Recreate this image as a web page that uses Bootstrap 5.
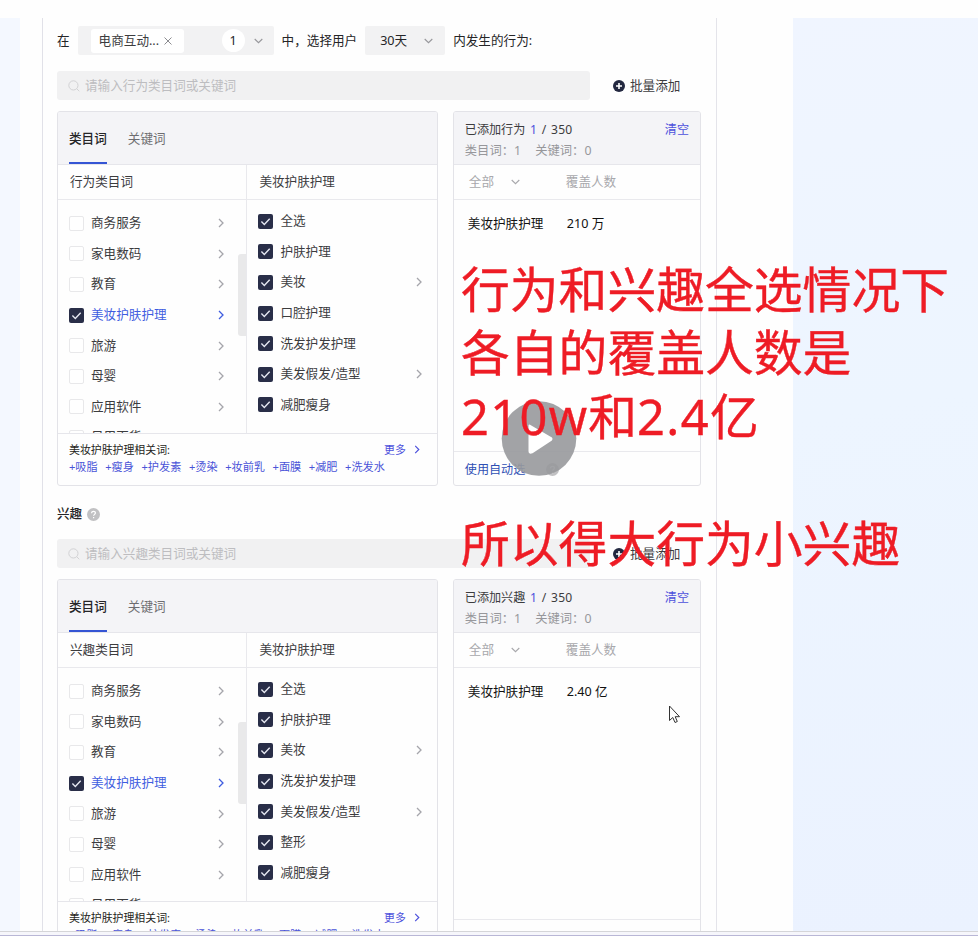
<!DOCTYPE html>
<html lang="zh-CN">
<head>
<meta charset="utf-8">
<meta name="viewport" content="width=device-width, initial-scale=1">
<title>行为兴趣定向</title>
<link href="https://cdn.jsdelivr.net/npm/bootstrap@5.3.0/dist/css/bootstrap.min.css" rel="stylesheet">
<style>
  body{font-family:"Noto Sans","Noto Sans CJK SC",sans-serif;font-size:12.6px;line-height:18px;color:#3c3c3e;height:936px;overflow:hidden;background:#fff}
  .topbar{height:18px;background:#fefefe}
  .stage{height:913px;background:linear-gradient(90deg,#f4f8ff 0,#f4f8ff 20px,transparent 20px),linear-gradient(170deg,#f1f5ff,#edf5ff 50%,#ebf2ff)}
  .sheet{width:773px;margin-left:20px;padding:0 76px 0 22px;background:#fefefe}
  .inner{border-left:1px solid #e1e1e8;border-right:1px solid #e4e4ea;height:913px;padding:8px 15px 0 14px}
  .botbar{height:5px;background:#f6f6fb;border-top:1px solid #d5d5d8;border-bottom:1px solid #b9b7d6}
  .sel{background:#f2f2f3;height:29px;border-radius:2px}
  .cond{height:29px;color:#252527}
  .chip{background:#fff;height:24px;width:93px;border-radius:3px;margin-left:13px;padding-left:8px;color:#3c3c3e}
  .cnt{width:23px;height:23px;border-radius:50%;background:#fff;margin-left:38px}
  .find{width:533px;height:29px;background:#f1f1f2;border-radius:3px;color:#bdbdc0;padding-left:11px;gap:5px}
  .find svg{color:#d2d2d4}
  .addb{margin-left:23px;gap:5px}
  .findrow{height:29px}
  .panels{margin-top:11px;gap:15px;height:375px}
  .box{border:1px solid #e3e3e8;border-radius:3px;background:#fefefe;overflow:hidden}
  .b-left{width:382px}
  .b-right{width:249px}
  .hd{height:53px;background:#f4f4f7;border-bottom:1px solid #e6e6eb;flex:none}
  .b-left .hd{padding:0 11px;gap:21px;color:#6d6d70}
  .tab{border-bottom:2px solid transparent;padding-top:3px}
  .tab.on{color:#252527;font-weight:500;border-color:#3555d4}
  .colwrap{height:268px;flex:none}
  .c1{width:190px;border-right:1px solid #e9e9ed;position:relative}
  .c2{width:190px}
  .sub{height:35px;border-bottom:1px solid #e9e9ed;flex:none}
  .c1 .sub{padding-left:12px}
  .c2 .sub{padding-left:12px}
  .lst{overflow:hidden;height:233px}
  .c1 .lst{padding:8px 22px 0 11px}
  .c2 .lst{padding:6px 15px 0 11px}
  .it{height:30.6px;gap:7px}
  .bx{width:15px;height:15px;border:1px solid #e8e8ea;border-radius:2px;flex:none;background:#fff}
  .bx.ck{border:0;background:#292e48}
  .bx svg{display:block}
  .arr{color:#a5a5ab;margin-left:auto;flex:none}
  .blue{color:#3f5de0}
  .it.blue .arr{color:#3f5de0}
  .thumb{position:absolute;right:0;top:89px;width:8px;height:82px;background:#e9e9ea;border-radius:3px 0 0 3px}
  .rel{border-top:1px solid #e6e6eb;padding:7px 17px 0 11px;font-size:10.9px;line-height:17px;color:#1f1f21;flex:1}
  .rel .tags{gap:7.6px;color:#4a53d8;white-space:nowrap;font-size:11.15px}
  .b-right .hd{padding:8px 11px 0;font-size:12.1px;line-height:20.5px}
  .num{word-spacing:1.2px;letter-spacing:.25px}
  .mut{color:#97979b}
  .hd .mut{font-size:12.3px}
  .vio{color:#4d51dc}
  .flt{height:35px;border-bottom:1px solid #e9e9ed;color:#a8a8ac;font-size:12.6px;padding-left:15px;flex:none}
  .w1{width:97px;flex:none}
  .res{height:47px;color:#111;padding-left:14px}
  .auto{height:34px;border-top:1px solid #e9e9ed;padding:2px 0 0 11px;color:#2f4fb4;font-size:12.1px}
  .ttl{height:18px;margin-top:19px;color:#252527;font-weight:500;gap:5px}
  .play{position:absolute;left:501px;top:400px}
  .note{position:absolute;left:461px;top:258px;font-size:48.8px;line-height:63.4px;color:#ee1c25;white-space:pre;-webkit-text-stroke:.4px #ee1c25}
  .note span{letter-spacing:1.3px}
  .cur{position:absolute;left:668px;top:705px}
</style>
</head>
<body class="position-relative">
<svg width="0" height="0" class="position-absolute">
  <symbol id="ck" viewBox="0 0 15 15"><path d="M3.4 7.600l2.900 2.800 5.400-5.600" fill="none" stroke="#e6e8f2" stroke-width="1.4"/></symbol>
  <symbol id="ar" viewBox="0 0 6 10"><path d="M1 1l4 4-4 4" fill="none" stroke="currentColor" stroke-width="1.3"/></symbol>
  <symbol id="dn" viewBox="0 0 9 6"><path d="M.7 1l3.8 3.700L8.300 1" fill="none" stroke="currentColor" stroke-width="1.1"/></symbol>
  <symbol id="mg" viewBox="0 0 12 12"><circle cx="5.400" cy="5.400" r="4.600" fill="none" stroke="currentColor"/><path d="M8.700 8.700l2.600 2.600" stroke="currentColor"/></symbol>
  <symbol id="pl" viewBox="0 0 12 12"><circle cx="6" cy="6" r="6" fill="#232840"/><path d="M6 3v6M3 6h6" stroke="#fff" stroke-width="1.6"/></symbol>
  <symbol id="qm" viewBox="0 0 13 13"><circle cx="6.500" cy="6.500" r="6.500" fill="#c1c1c3"/><path d="M4.600 5.200c0-2.600 3.900-2.400 3.800-.1 0 1.300-1.800 1.300-1.800 2.700M6.600 9v1.300" fill="none" stroke="#fff" stroke-width="1.2"/></symbol>
</svg>
<div class="topbar"></div>
<main class="stage">
 <div class="sheet"><div class="inner overflow-hidden">
  <div class="cond d-flex align-items-center">
    <span>在</span>
    <div class="sel d-flex align-items-center" style="width:196px;margin-left:8px">
      <span class="chip d-flex align-items-center">电商互动...<svg width="8" height="8" viewBox="0 0 8 8" style="margin-left:5px"><path d="M.5.5l7 7M7.500.5l-7 7" stroke="#8c8c90"/></svg></span>
      <span class="cnt d-flex align-items-center justify-content-center">1</span>
      <svg width="9" height="6" class="mut" style="margin-left:9px"><use href="#dn"/></svg>
    </div>
    <span style="margin-left:8px">中，选择用户</span>
    <div class="sel d-flex align-items-center justify-content-between" style="width:80px;margin-left:8px;padding:0 12px 0 15px"><span>30天</span><svg width="9" height="6" class="mut"><use href="#dn"/></svg></div>
    <span style="margin-left:8px">内发生的行为:</span>
  </div>

  <section style="margin-top:16px">
   <div class="findrow d-flex align-items-center">
    <div class="find d-flex align-items-center"><svg width="12" height="12"><use href="#mg"/></svg>请输入行为类目词或关键词</div>
    <div class="addb d-flex align-items-center"><svg width="12" height="12"><use href="#pl"/></svg>批量添加</div>
   </div>
   <div class="panels d-flex">
    <div class="box b-left d-flex flex-column">
     <div class="hd d-flex"><span class="tab on d-flex align-items-center">类目词</span><span class="tab d-flex align-items-center">关键词</span></div>
     <div class="colwrap d-flex">
      <div class="c1"><div class="sub d-flex align-items-center">行为类目词</div>
       <div class="lst">
        <div class="it d-flex align-items-center"><i class="bx"></i>商务服务<svg class="arr" width="6" height="10"><use href="#ar"/></svg></div>
        <div class="it d-flex align-items-center"><i class="bx"></i>家电数码<svg class="arr" width="6" height="10"><use href="#ar"/></svg></div>
        <div class="it d-flex align-items-center"><i class="bx"></i>教育<svg class="arr" width="6" height="10"><use href="#ar"/></svg></div>
        <div class="it blue d-flex align-items-center"><i class="bx ck"><svg width="15" height="15"><use href="#ck"/></svg></i>美妆护肤护理<svg class="arr" width="6" height="10"><use href="#ar"/></svg></div>
        <div class="it d-flex align-items-center"><i class="bx"></i>旅游<svg class="arr" width="6" height="10"><use href="#ar"/></svg></div>
        <div class="it d-flex align-items-center"><i class="bx"></i>母婴<svg class="arr" width="6" height="10"><use href="#ar"/></svg></div>
        <div class="it d-flex align-items-center"><i class="bx"></i>应用软件<svg class="arr" width="6" height="10"><use href="#ar"/></svg></div>
        <div class="it d-flex align-items-center"><i class="bx"></i>日用百货</div>
       </div><div class="thumb"></div>
      </div>
      <div class="c2"><div class="sub d-flex align-items-center">美妆护肤护理</div>
       <div class="lst">
        <div class="it d-flex align-items-center"><i class="bx ck"><svg width="15" height="15"><use href="#ck"/></svg></i>全选</div>
        <div class="it d-flex align-items-center"><i class="bx ck"><svg width="15" height="15"><use href="#ck"/></svg></i>护肤护理</div>
        <div class="it d-flex align-items-center"><i class="bx ck"><svg width="15" height="15"><use href="#ck"/></svg></i>美妆<svg class="arr" width="6" height="10"><use href="#ar"/></svg></div>
        <div class="it d-flex align-items-center"><i class="bx ck"><svg width="15" height="15"><use href="#ck"/></svg></i>口腔护理</div>
        <div class="it d-flex align-items-center"><i class="bx ck"><svg width="15" height="15"><use href="#ck"/></svg></i>洗发护发护理</div>
        <div class="it d-flex align-items-center"><i class="bx ck"><svg width="15" height="15"><use href="#ck"/></svg></i>美发假发/造型<svg class="arr" width="6" height="10"><use href="#ar"/></svg></div>
        <div class="it d-flex align-items-center"><i class="bx ck"><svg width="15" height="15"><use href="#ck"/></svg></i>减肥瘦身</div>
       </div>
      </div>
     </div>
     <div class="rel">
      <div class="d-flex justify-content-between"><span>美妆护肤护理相关词:</span><span class="vio d-flex align-items-center gap-2">更多<svg width="6" height="9"><use href="#ar"/></svg></span></div>
      <div class="tags d-flex"><span>+吸脂</span><span>+瘦身</span><span>+护发素</span><span>+烫染</span><span>+妆前乳</span><span>+面膜</span><span>+减肥</span><span>+洗发水</span></div>
     </div>
    </div>
    <div class="box b-right d-flex flex-column">
     <div class="hd"><div class="d-flex justify-content-between"><span>已添加行为<span class="num"> <span class="vio">1</span> / 350</span></span><span class="vio">清空</span></div><div class="mut">类目词：1 <span style="margin-left:11px">关键词：0</span></div></div>
     <div class="flt d-flex align-items-center"><span class="w1 d-flex align-items-center">全部<svg width="9" height="6" style="margin-left:17px"><use href="#dn"/></svg></span>覆盖人数</div>
     <div class="res d-flex align-items-center"><span class="w1" style="width:99px">美妆护肤护理</span>210 万</div>
     <div class="auto mt-auto d-flex align-items-center">使用自动选<svg width="13" height="13" style="margin-left:21px"><use href="#qm"/></svg></div>
    </div>
   </div>
  </section>

  <div class="ttl d-flex align-items-center">兴趣<svg width="13" height="13"><use href="#qm"/></svg></div>

  <section style="margin-top:16px">
   <div class="findrow d-flex align-items-center">
    <div class="find d-flex align-items-center"><svg width="12" height="12"><use href="#mg"/></svg>请输入兴趣类目词或关键词</div>
    <div class="addb d-flex align-items-center"><svg width="12" height="12"><use href="#pl"/></svg>批量添加</div>
   </div>
   <div class="panels d-flex">
    <div class="box b-left d-flex flex-column">
     <div class="hd d-flex"><span class="tab on d-flex align-items-center">类目词</span><span class="tab d-flex align-items-center">关键词</span></div>
     <div class="colwrap d-flex">
      <div class="c1"><div class="sub d-flex align-items-center">兴趣类目词</div>
       <div class="lst">
        <div class="it d-flex align-items-center"><i class="bx"></i>商务服务<svg class="arr" width="6" height="10"><use href="#ar"/></svg></div>
        <div class="it d-flex align-items-center"><i class="bx"></i>家电数码<svg class="arr" width="6" height="10"><use href="#ar"/></svg></div>
        <div class="it d-flex align-items-center"><i class="bx"></i>教育<svg class="arr" width="6" height="10"><use href="#ar"/></svg></div>
        <div class="it blue d-flex align-items-center"><i class="bx ck"><svg width="15" height="15"><use href="#ck"/></svg></i>美妆护肤护理<svg class="arr" width="6" height="10"><use href="#ar"/></svg></div>
        <div class="it d-flex align-items-center"><i class="bx"></i>旅游<svg class="arr" width="6" height="10"><use href="#ar"/></svg></div>
        <div class="it d-flex align-items-center"><i class="bx"></i>母婴<svg class="arr" width="6" height="10"><use href="#ar"/></svg></div>
        <div class="it d-flex align-items-center"><i class="bx"></i>应用软件<svg class="arr" width="6" height="10"><use href="#ar"/></svg></div>
        <div class="it d-flex align-items-center"><i class="bx"></i>日用百货</div>
       </div><div class="thumb"></div>
      </div>
      <div class="c2"><div class="sub d-flex align-items-center">美妆护肤护理</div>
       <div class="lst">
        <div class="it d-flex align-items-center"><i class="bx ck"><svg width="15" height="15"><use href="#ck"/></svg></i>全选</div>
        <div class="it d-flex align-items-center"><i class="bx ck"><svg width="15" height="15"><use href="#ck"/></svg></i>护肤护理</div>
        <div class="it d-flex align-items-center"><i class="bx ck"><svg width="15" height="15"><use href="#ck"/></svg></i>美妆<svg class="arr" width="6" height="10"><use href="#ar"/></svg></div>
        <div class="it d-flex align-items-center"><i class="bx ck"><svg width="15" height="15"><use href="#ck"/></svg></i>洗发护发护理</div>
        <div class="it d-flex align-items-center"><i class="bx ck"><svg width="15" height="15"><use href="#ck"/></svg></i>美发假发/造型<svg class="arr" width="6" height="10"><use href="#ar"/></svg></div>
        <div class="it d-flex align-items-center"><i class="bx ck"><svg width="15" height="15"><use href="#ck"/></svg></i>整形</div>
        <div class="it d-flex align-items-center"><i class="bx ck"><svg width="15" height="15"><use href="#ck"/></svg></i>减肥瘦身</div>
       </div>
      </div>
     </div>
     <div class="rel">
      <div class="d-flex justify-content-between"><span>美妆护肤护理相关词:</span><span class="vio d-flex align-items-center gap-2">更多<svg width="6" height="9"><use href="#ar"/></svg></span></div>
      <div class="tags d-flex"><span>+吸脂</span><span>+瘦身</span><span>+护发素</span><span>+烫染</span><span>+妆前乳</span><span>+面膜</span><span>+减肥</span><span>+洗发水</span></div>
     </div>
    </div>
    <div class="box b-right d-flex flex-column">
     <div class="hd"><div class="d-flex justify-content-between"><span>已添加兴趣<span class="num"> <span class="vio">1</span> / 350</span></span><span class="vio">清空</span></div><div class="mut">类目词：1 <span style="margin-left:11px">关键词：0</span></div></div>
     <div class="flt d-flex align-items-center"><span class="w1 d-flex align-items-center">全部<svg width="9" height="6" style="margin-left:17px"><use href="#dn"/></svg></span>覆盖人数</div>
     <div class="res d-flex align-items-center"><span class="w1" style="width:99px">美妆护肤护理</span>2.40 亿</div>
     <div class="auto mt-auto"></div>
    </div>
   </div>
  </section>
 </div></div>
</main>
<div class="botbar"></div>

<svg class="play" width="76" height="76" viewBox="0 0 76 76"><circle cx="38" cy="38.500" r="37.300" fill="#98999c" fill-opacity=".9"/><path d="M28.500 25.500l21.500 12.600q1 .9 0 1.800L31 52.300q-2.500 1-2.500-1z" fill="#fff" stroke="#fff" stroke-width="2" stroke-linejoin="round"/></svg>
<div class="note">行为和兴趣全选情况下
各自的覆盖人数是
<span>210w</span>和<span>2.4</span>亿

所以得大行为小兴趣</div>
<svg class="cur" width="13" height="19" viewBox="0 0 13 19"><path d="M1.500 1v14.500l3.300-3 2.200 5 2.300-1-2.100-4.800h4.300z" fill="#fff" stroke="#333" stroke-width="1"/></svg>
<script src="https://cdn.jsdelivr.net/npm/bootstrap@5.3.0/dist/js/bootstrap.bundle.min.js"></script>
</body>
</html>
